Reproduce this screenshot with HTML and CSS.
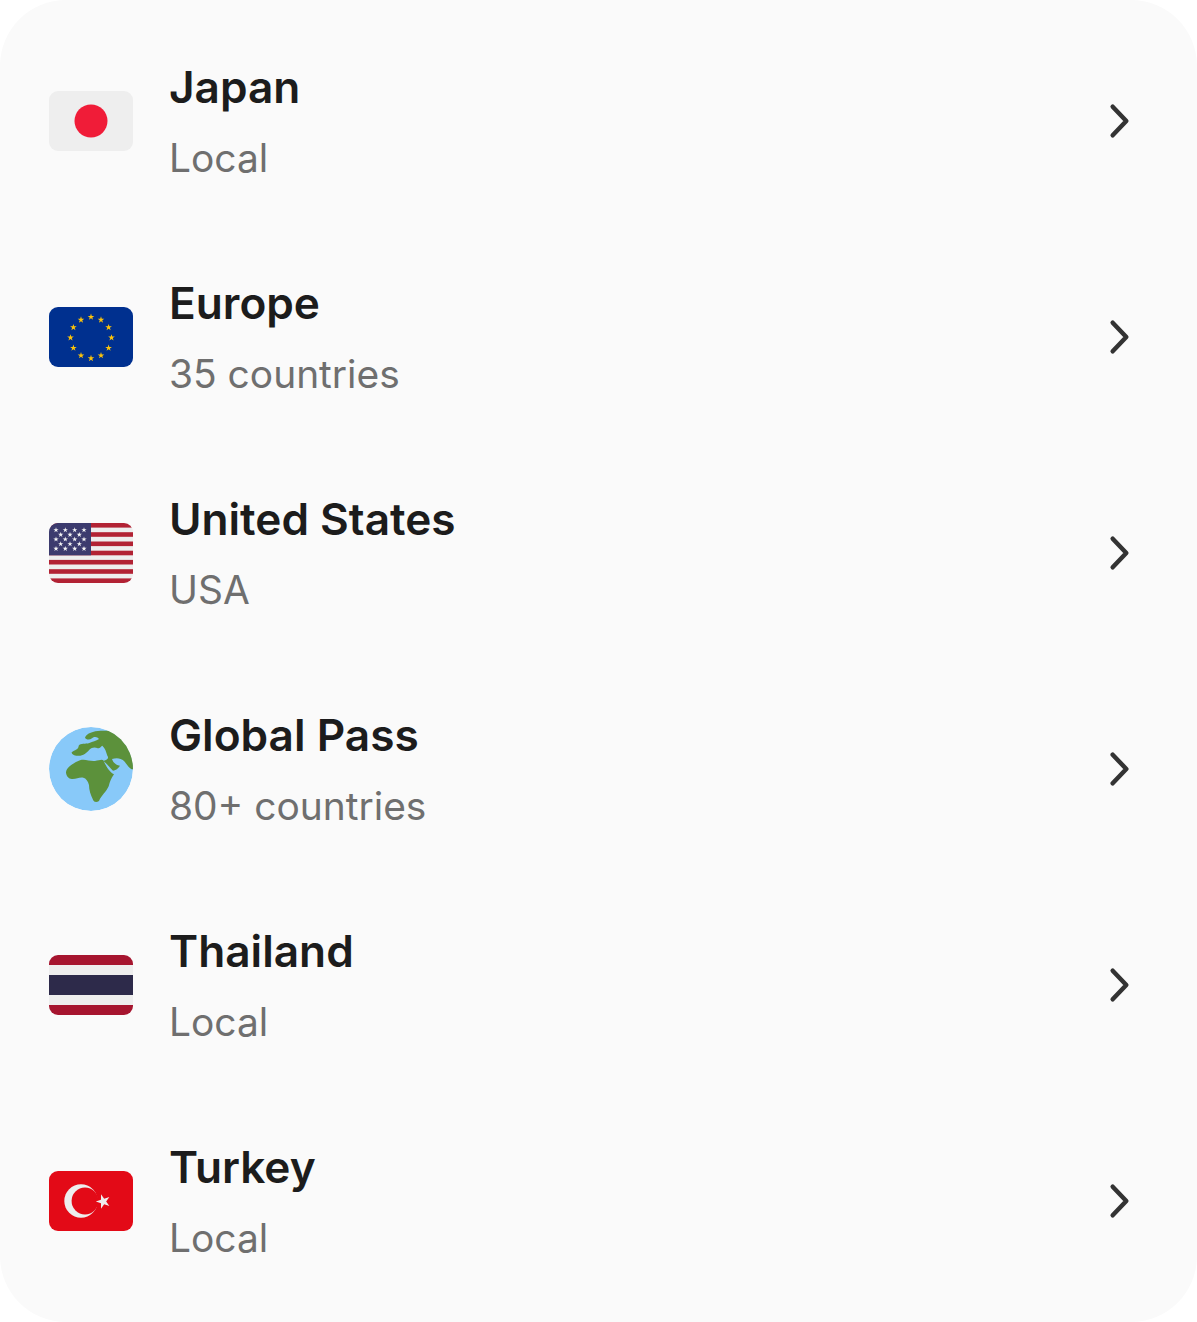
FILE: index.html
```html
<!DOCTYPE html>
<html lang="en">
<head>
<meta charset="utf-8">
<title>Destinations</title>
<link rel="stylesheet" href="styles.css">
</head>
<body>
<main class="card">
  <a class="row">
    <span class="icon"><svg class="flag" viewBox="0 0 84 60"><rect width="84" height="60" fill="#eeeeee"/><circle cx="42" cy="30" r="16.5" fill="#f01c38"/></svg></span>
    <span class="text"><span class="title">Japan</span><span class="sub">Local</span></span>
    <svg class="chev" viewBox="0 0 24 40"><path d="M4.700 5.700 L18.300 20 L4.700 34.300"/></svg>
  </a>
  <a class="row">
    <span class="icon"><svg class="flag" viewBox="0 0 84 60"><defs><polygon id="star" points="0,-1 .225,-.309 .951,-.309 .363,.118 .588,.809 0,.382 -.588,.809 -.363,.118 -.951,-.309 -.225,-.309"/></defs><rect width="84" height="60" fill="#00308f"/><g fill="#fcc30a"><use href="#star" transform="translate(42 10) scale(3.500)"/><use href="#star" transform="translate(52 12.800) scale(3.500)"/><use href="#star" transform="translate(59.600 20.400) scale(3.500)"/><use href="#star" transform="translate(62.500 30.700) scale(3.500)"/><use href="#star" transform="translate(59.600 41) scale(3.500)"/><use href="#star" transform="translate(52 48.500) scale(3.500)"/><use href="#star" transform="translate(42 51.300) scale(3.500)"/><use href="#star" transform="translate(32 48.500) scale(3.500)"/><use href="#star" transform="translate(24.400 41) scale(3.500)"/><use href="#star" transform="translate(21.500 30.700) scale(3.500)"/><use href="#star" transform="translate(24.400 20.400) scale(3.500)"/><use href="#star" transform="translate(32 12.800) scale(3.500)"/></g></svg></span>
    <span class="text"><span class="title">Europe</span><span class="sub">35 countries</span></span>
    <svg class="chev" viewBox="0 0 24 40"><path d="M4.700 5.700 L18.300 20 L4.700 34.300"/></svg>
  </a>
  <a class="row">
    <span class="icon"><svg class="flag" viewBox="0 0 84 60"><rect width="84" height="60" fill="#eeeeee"/><g fill="#b22234"><rect width="84" height="4.600"/><rect y="9.200" width="84" height="4.600"/><rect y="18.500" width="84" height="4.600"/><rect y="27.700" width="84" height="4.600"/><rect y="36.900" width="84" height="4.600"/><rect y="46.200" width="84" height="4.600"/><rect y="55.400" width="84" height="4.600"/></g><rect width="42" height="32.300" fill="#3c3b6e"/><g fill="#f5f5f5"><use href="#star" transform="translate(7 7) scale(2.800)"/><use href="#star" transform="translate(16.300 7) scale(2.800)"/><use href="#star" transform="translate(25.700 7) scale(2.800)"/><use href="#star" transform="translate(35 7) scale(2.800)"/><use href="#star" transform="translate(11.700 11.700) scale(2.800)"/><use href="#star" transform="translate(21 11.700) scale(2.800)"/><use href="#star" transform="translate(30.300 11.700) scale(2.800)"/><use href="#star" transform="translate(7 16.300) scale(2.800)"/><use href="#star" transform="translate(16.300 16.300) scale(2.800)"/><use href="#star" transform="translate(25.700 16.300) scale(2.800)"/><use href="#star" transform="translate(35 16.300) scale(2.800)"/><use href="#star" transform="translate(11.700 21) scale(2.800)"/><use href="#star" transform="translate(21 21) scale(2.800)"/><use href="#star" transform="translate(30.300 21) scale(2.800)"/><use href="#star" transform="translate(7 25.700) scale(2.800)"/><use href="#star" transform="translate(16.300 25.700) scale(2.800)"/><use href="#star" transform="translate(25.700 25.700) scale(2.800)"/><use href="#star" transform="translate(35 25.700) scale(2.800)"/></g></svg></span>
    <span class="text"><span class="title">United States</span><span class="sub">USA</span></span>
    <svg class="chev" viewBox="0 0 24 40"><path d="M4.700 5.700 L18.300 20 L4.700 34.300"/></svg>
  </a>
  <a class="row">
    <span class="icon"><svg class="globe" viewBox="57 36 252 252"><circle cx="183" cy="162" r="126" fill="#88c9f9"/><path fill="#5c913b" d="M108 172 C110 158 122 148 150 136 C165 131 180 140 195 138 C207 136 216 132 220 136 C226 150 238 172 252 178 C244 190 240 198 236 214 C228 232 215 240 207 258 C200 262 192 262 189 254 C182 240 177 225 177 210 C174 198 168 190 160 188 C148 186 140 192 128 192 C118 194 108 184 108 172 Z"/><path fill="#5c913b" d="M165 68 C170 54 190 48 212 47 L235 47 L320 60 L320 163 L305 163 C298 160 292 150 282 138 C272 128 258 128 246 132 C250 144 258 150 270 152 C266 160 256 166 249 167 C240 160 232 146 220 138 C232 134 238 130 232 122 C228 110 226 100 217 92 C212 94 212 100 203 100 C196 96 186 96 178 104 C170 114 160 122 146 122 C136 124 124 118 125 112 C134 104 146 104 146 92 C152 84 166 88 178 84 C188 80 198 78 207 72 C202 64 192 64 186 70 C178 76 168 74 165 68 Z"/></svg></span>
    <span class="text"><span class="title">Global Pass</span><span class="sub">80+ countries</span></span>
    <svg class="chev" viewBox="0 0 24 40"><path d="M4.700 5.700 L18.300 20 L4.700 34.300"/></svg>
  </a>
  <a class="row">
    <span class="icon"><svg class="flag" viewBox="0 0 84 60"><rect width="84" height="60" fill="#a6152f"/><rect y="10" width="84" height="40" fill="#eeeeee"/><rect y="20" width="84" height="20" fill="#2d2a4a"/></svg></span>
    <span class="text"><span class="title">Thailand</span><span class="sub">Local</span></span>
    <svg class="chev" viewBox="0 0 24 40"><path d="M4.700 5.700 L18.300 20 L4.700 34.300"/></svg>
  </a>
  <a class="row">
    <span class="icon"><svg class="flag" viewBox="0 0 84 60"><rect width="84" height="60" fill="#e30a17"/><circle cx="32" cy="30" r="16.700" fill="#eeeeee"/><circle cx="36" cy="30" r="13.400" fill="#e30a17"/><use href="#star" fill="#eeeeee" transform="translate(54.300 30.500) rotate(-18) scale(7.500)"/></svg></span>
    <span class="text"><span class="title">Turkey</span><span class="sub">Local</span></span>
    <svg class="chev" viewBox="0 0 24 40"><path d="M4.700 5.700 L18.300 20 L4.700 34.300"/></svg>
  </a>
</main>
</body>
</html>
```
FILE: styles.css
```css
html, body {
  margin: 0;
  padding: 0;
  background: #ffffff;
}
.card {
  box-sizing: border-box;
  width: 1197px;
  height: 1322px;
  padding: 13px 0;
  background: #fafafa;
  border-radius: 66px;
  font-family: Inter, "Liberation Sans", sans-serif;
}
.row {
  display: flex;
  align-items: center;
  height: 216px;
  padding: 0 65px 0 49px;
}
.icon {
  flex: none;
  display: flex;
  align-items: center;
  justify-content: center;
  width: 84px;
  height: 84px;
  margin-right: 36px;
}
.flag {
  display: block;
  width: 84px;
  height: 60px;
  border-radius: 9px;
}
.globe {
  display: block;
  width: 84px;
  height: 84px;
  border-radius: 50%;
}
.text {
  flex: 1;
  display: flex;
  flex-direction: column;
  gap: 15px;
  padding-top: 3px;
}
.title {
  font-size: 44.200px;
  line-height: 55px;
  font-weight: 600;
  color: #1c1c1c;
}
.sub {
  font-size: 38.900px;
  line-height: 55px;
  font-weight: 400;
  color: #6f6f6f;
}
.chev {
  flex: none;
  width: 24px;
  height: 40px;
  fill: none;
  stroke: #333333;
  stroke-width: 4.500;
  stroke-linecap: round;
  stroke-linejoin: round;
}
```
